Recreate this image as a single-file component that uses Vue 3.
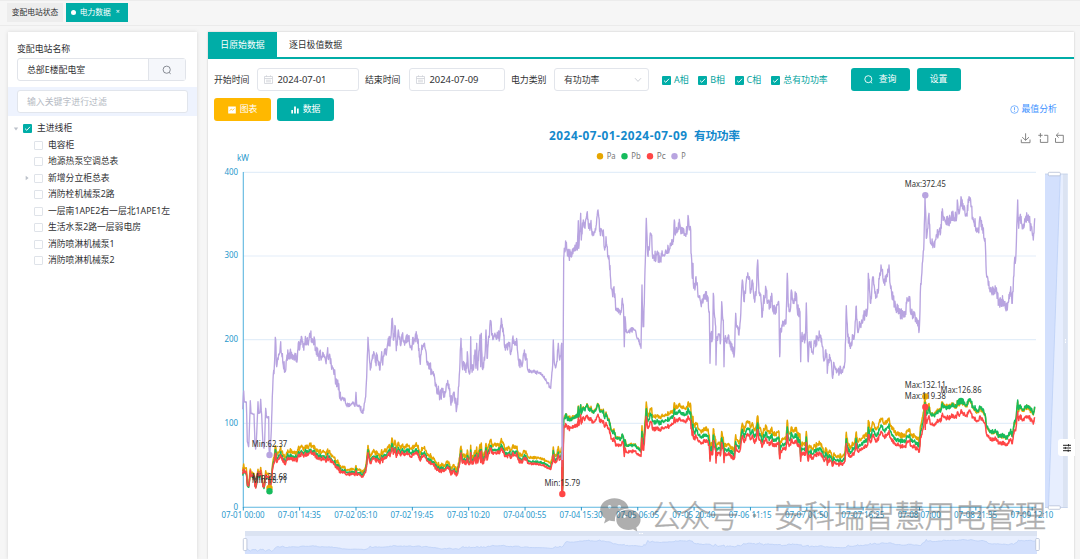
<script setup>
const tree = [
  { name: '电容柜' },
  { name: '地源热泵空调总表' },
  { name: '新增分立柜总表', parent: true },
  { name: '消防栓机械泵2路' },
  { name: '一层南1APE2右一层北1APE1左' },
  { name: '生活水泵2路一层弱电房' },
  { name: '消防喷淋机械泵1' },
  { name: '消防喷淋机械泵2' }
]
const phases = [
  { name: 'A相', w: 15.3 },
  { name: 'B相', w: 15.3 },
  { name: 'C相', w: 15.7 },
  { name: '总有功功率', w: 45 }
]
const legend = [
  { x: 600, name: 'Pa', color: '#e6a600', w: 9 },
  { x: 624.5, name: 'Pb', color: '#16bb5c', w: 9.5 },
  { x: 650, name: 'Pc', color: '#ff4646', w: 9 },
  { x: 674.5, name: 'P', color: '#b8a4e0', w: 4.5 }
]
const xLabels = ['07-01 00:00', '07-01 14:35', '07-02 05:10', '07-02 19:45', '07-03 10:20', '07-04 00:55', '07-04 15:30', '07-05 06:05', '07-05 20:40', '07-06 11:15', '07-07 01:50', '07-07 16:25', '07-08 07:00', '07-08 21:35', '07-09 12:10']
const yLabels = [0, 100, 200, 300, 400]
const BASE = 507
const SCALE = 0.8375

const blocks = [
  { ox: 205, oy: 330, d: '113,238 116,183 118,215 124,216 127,335 131,350 132,330 136,212 138,250 147,252 150,345 152,357 154,335 159,215 161,250 165,248 167,208 170,255 174,345 177,355 179,330 182,235 185,262 191,260 192,355 194,375 198,320 202,200 204,150 208,110 211,22 215,110 222,75 227,35 231,80 241,125 246,75 255,70 263,88 270,70 277,88 281,35 284,58 290,20 294,52 300,38 306,25 310,45 314,10 320,25 325,30 333,55 340,72 352,82 362,95 367,67 375,80 380,118 388,125 395,170 398,150 407,208 418,205 425,225 440,222 451,222 453,187 455,225 465,232 474,250 478,220 482,200 485,140 489,22 493,80 496,120 500,90 505,75 512,95 517,75 525,120 530,65 533,105 538,65 544,75 550,25 555,48 562,-35 565,30 571,-10 574,62 580,0 586,45 592,12 600,38 610,25 618,48 628,32 636,15 642,55 648,75 655,50' },
  { ox: 420, oy: 300, d: '0,185 8,140 18,155 22,195 40,215 48,260 60,285 75,275 82,255 88,270 92,310 100,280 110,325 114,290 119,210 123,115 127,200 140,205 142,155 146,215 151,205 152,110 154,205 160,210 165,150 168,205 170,130 173,210 180,105 182,200 184,100 187,205 195,165 198,90 201,175 207,110 212,62 216,105 226,110 240,105 244,55 248,95 252,105 255,140 265,130 274,155 279,108 284,135 291,125 295,180 306,200 312,165 320,175 323,210 355,218 370,230 380,245 392,265 397,210 400,120 404,195 410,185 415,130 419,180 425,130 426,480 427,500 428,440' },
  { ox: 540, oy: 180, d: '71,235 73,205 78,195 86,230 100,210 110,190 112,210 115,122 116,205 122,100 124,180 130,120 135,145 142,95 146,145 152,130 155,150 167,150 174,90 180,155 190,150 194,210 198,170 203,230 208,245 212,300 218,350 222,320 227,390 243,398 247,355 250,375 253,500 255,410 258,455 285,450 294,475 303,505 306,315 309,440 311,440 315,270 319,115 323,225 328,210 330,170 334,165 338,235 350,225 360,238 362,245 365,225 380,220 392,190 400,185 403,120 406,165 419,130 424,160 430,145 435,165 442,150 445,110 448,150 452,150 453,220 457,295 459,250 460,310 466,320 468,290 473,335 484,380 492,345 503,350 508,395 510,550 512,460 518,475 520,340 523,400 527,440 528,555 530,475 542,480 545,365 550,420 552,560 554,475 563,478 570,490 578,500 583,525 587,400 590,440 597,465 600,430 607,300 613,365 620,290 628,290 631,340 637,300 641,345 645,360 649,330 653,240 657,340 661,345 667,410 670,370 678,325 682,370 690,380 695,340 698,390 717,380 719,530 722,445 738,430 742,280 745,380 752,380 754,330 757,360 768,345 772,390 780,395 782,545 785,470 796,480 799,370 802,480' },
  { ox: 800, oy: 160, d: '24,602 25,605 28,545 38,575 45,550 60,525 68,560 70,590 80,580 82,640 85,600 93,600 98,655 102,610 112,630 125,630 135,605 139,437 143,530 150,550 163,530 168,440 172,500 177,505 185,480 203,445 205,340 212,430 219,350 227,415 233,395 243,315 252,370 262,350 267,315 272,385 280,420 288,445 305,465 315,470 320,430 328,410 332,460 345,465 358,508 361,400 367,310 371,270 375,108 379,235 387,160 390,230 400,255 410,230 424,205 425,155 432,178 445,185 460,165 470,170 472,120 478,160 483,110 490,150 500,160 507,110 513,140 520,180 535,215 540,170 548,205 556,250 560,350 575,400 588,390 597,430 610,420 622,450 632,380 637,430 643,310 648,280 653,120 656,205 660,170 668,200 685,165 700,240 704,175' }
]
const points = blocks.flatMap(b => b.d.split(' ').map(s => {
  const [x, y] = s.split(',').map(Number)
  return [b.ox + x / 3, b.oy + y / 3]
}))
const extra = [[800.7, 361], [801.3, 337], [805, 338], [806.3, 303]]
const all = points.concat(extra).sort((a, b) => a[0] - b[0])

let seed = 71
const rnd = () => {
  seed = (seed * 16807) % 2147483647
  return seed / 2147483647 - 0.5
}
const amp = x => {
  if (x < 271) return 1.5
  if (x > 338 && x < 370) return 5
  if (x > 527 && x < 552) return 4
  if (x > 614 && x < 640) return 6
  return 11.5
}
const samples = []
for (let i = 0; i < all.length - 1; i++) {
  const [x0, y0] = all[i]
  const [x1, y1] = all[i + 1]
  samples.push([x0, y0])
  const n = Math.floor((x1 - x0) / 0.42)
  for (let k = 1; k <= n; k++) {
    const t = k / (n + 1)
    samples.push([x0 + (x1 - x0) * t, y0 + (y1 - y0) * t + rnd() * amp(x0)])
  }
}
samples.push(all[all.length - 1])
const line = pts => 'M' + pts.map(p => p[0].toFixed(1) + ' ' + p[1].toFixed(1)).join('L')
const total = line(samples)
const ratio = {
  a: x => (x < 563 ? 0.358 : x < 641 ? 0.347 : x < 690 ? 0.358 : x < 925 ? 0.366 : x < 955 ? 0.35 : 0.341),
  b: x => (x < 270 ? 0.315 : x < 563 ? 0.328 : x < 641 ? 0.344 : x < 930 ? 0.336 : 0.345),
  c: x => (x < 270 ? 0.325 : x < 563 ? 0.312 : 0.309)
}
const phaseLine = key => line(samples.map(([x, y]) => [x, BASE - (BASE - y) * ratio[key](x) + rnd() * 1.8 - 0.9]))
const lineA = phaseLine('a')
const lineB = phaseLine('b')
const lineC = phaseLine('c')
const mini = samples.filter((s, i) => i % 4 === 0 && Math.abs(s[0] - 562) > 0.7).map(([x, y]) => [245 + (x - 243) * 0.999, 554 - (BASE - y) * 0.047])
const miniLine = line(mini)
const miniArea = miniLine + 'L1037 554L245 554Z'

const marks = [
  { x: 269.5, y: 455, c: '#b8a4e0', t: 'Min:62.37', w: 35.5 },
  { x: 269.5, y: 488, c: '#e6a600', t: 'Min:22.68', w: 35.5 },
  { x: 269.5, y: 491.3, c: '#16bb5c', t: 'Min:18.71', w: 35.5 },
  { x: 562.3, y: 494, c: '#ff4646', t: 'Min:15.79', w: 35.5 },
  { x: 925.3, y: 195.3, c: '#b8a4e0', t: 'Max:372.45', w: 41 },
  { x: 925.3, y: 396.4, c: '#e6a600', t: 'Max:132.11', w: 41 },
  { x: 961, y: 401, c: '#16bb5c', t: 'Max:126.86', w: 41 },
  { x: 925.3, y: 407, c: '#ff4646', t: 'Max:119.38', w: 41 }
]
</script>

<template>
  <div class="page">
    <nav class="tabs">
      <span class="tab">变配电站状态</span>
      <span class="tab active"><i class="dot"></i>电力数据<b class="close">×</b></span>
    </nav>
    <div class="body">
      <aside class="side">
        <div class="label">变配电站名称</div>
        <div class="station">
          <span class="station-name">总部E楼配电室</span>
          <span class="station-btn">
            <svg width="10" height="10" viewBox="0 0 10 10"><circle cx="4.7" cy="4.7" r="3.6" fill="none" stroke="#7d818a" stroke-width=".9" /><path d="M7 7.4L8.7 8.8" stroke="#7d818a" stroke-width=".9" /></svg>
          </span>
        </div>
        <div class="filter"><div class="filter-input">输入关键字进行过滤</div></div>
        <ul class="tree">
          <li class="root">
            <svg class="arrow" width="6" height="6" viewBox="0 0 6 6"><path d="M.8 1.5H5.2L3 4.5Z" fill="#bcc1ca" /></svg>
            <span class="check on"><svg viewBox="0 0 9 9"><path d="M2 4.6L3.8 6.3L7 2.8" /></svg></span>主进线柜
          </li>
          <li v-for="n in tree" :key="n.name">
            <svg class="arrow" width="6" height="6" viewBox="0 0 6 6"><path v-if="n.parent" d="M1.7 .8V5.2L4.6 3Z" fill="#bcc1ca" /></svg>
            <span class="check"></span>{{ n.name }}
          </li>
        </ul>
      </aside>
      <main class="main">
        <div class="heads"><span class="head active">日原始数据</span><span class="head">逐日极值数据</span></div>
        <div class="form">
          <span class="lab">开始时间</span>
          <span class="date">
            <svg width="9" height="9" viewBox="0 0 9 9"><path d="M.5 1.5H8.5V8.5H.5ZM.5 3.5H8.5M2.5 .3V2M6.5 .3V2M2 5.2H7M2 6.8H7" fill="none" stroke="#cfd2d8" stroke-width=".8" /></svg>2024-07-01</span>
          <span class="lab second">结束时间</span>
          <span class="date end">
            <svg width="9" height="9" viewBox="0 0 9 9"><path d="M.5 1.5H8.5V8.5H.5ZM.5 3.5H8.5M2.5 .3V2M6.5 .3V2M2 5.2H7M2 6.8H7" fill="none" stroke="#cfd2d8" stroke-width=".8" /></svg>2024-07-09</span>
          <span class="lab third">电力类别</span>
          <span class="select">有功功率<svg width="8" height="6" viewBox="0 0 8 6"><path d="M1 1.2L4 4.4L7 1.2" fill="none" stroke="#bfc3ca" stroke-width=".8" /></svg></span>
          <div class="phases">
            <span v-for="p in phases" :key="p.name" class="phase"><span class="check on"><svg viewBox="0 0 9 9"><path d="M2 4.6L3.8 6.3L7 2.8" /></svg></span><span :style="{ width: p.w + 'px' }">{{ p.name }}</span></span>
          </div>
          <span class="btn query"><svg width="9" height="9" viewBox="0 0 9 9"><circle cx="4.3" cy="4.2" r="3.5" fill="none" stroke="#fff" stroke-width=".9" /><path d="M6.6 6.8L8.2 8.3" stroke="#fff" stroke-width=".9" /></svg>查询</span>
          <span class="btn set">设置</span>
        </div>
        <div class="actions">
          <span class="btn chart-btn"><svg width="8" height="8" viewBox="0 0 8 8"><path d="M.2 .5H7.8V7.5H.2Z" fill="#fff" /><path d="M1.5 4.7L3.2 3.2L4.6 4.2L6.5 2.6" fill="none" stroke="#ffb800" stroke-width=".7" /></svg>图表</span>
          <span class="btn data-btn"><svg width="8" height="8" viewBox="0 0 8 8"><path d="M.3 4H2V7.5H.3ZM3.1 .6H4.9V7.5H3.1ZM6 2.6H7.7V7.5H6Z" fill="#fff" /></svg>数据</span>
          <span class="analysis"><svg width="9" height="9" viewBox="0 0 9 9"><circle cx="4.5" cy="4.5" r="3.8" fill="none" stroke="#4a98ff" stroke-width=".7" /><path d="M4.5 2.2V5.2M4.5 6V6.8" stroke="#4a98ff" stroke-width=".8" /></svg>最值分析</span>
        </div>
        <svg class="chart" width="866" height="438" viewBox="208 121 866 438">
          <text x="549" y="140" class="title" textLength="138">2024-07-01-2024-07-09</text>
          <text x="694" y="140" class="title" textLength="46">有功功率</text>
          <g v-for="l in legend" :key="l.name">
            <circle :cx="l.x" cy="156.2" r="3.2" :fill="l.color" />
            <text :x="l.x + 6.7" y="158.6" class="leg" :textLength="l.w" lengthAdjust="spacingAndGlyphs">{{ l.name }}</text>
          </g>
          <g fill="none" stroke="#777" stroke-width=".9">
            <path d="M1021.3 139.5V142.7H1030V139.5M1025.6 133.3V140.2M1022.2 137.2L1025.6 140.3L1029 137.2" />
            <path d="M1038.3 135.3H1042.6M1040.4 133.1V137.5M1044.2 135.3H1047.8V142.4H1040.4V139" />
            <path d="M1055.5 138V142.4H1063.3V135.3H1056.5M1058.6 133L1056.2 135.3L1058.6 137.6" />
          </g>
          <path d="M243 172.3H1036M243 256H1036M243 339.7H1036M243 423.4H1036" stroke="#e3eef9" stroke-width="1.2" />
          <text x="237" y="161" class="axis" textLength="12" lengthAdjust="spacingAndGlyphs">kW</text>
          <text v-for="v in yLabels" :key="v" x="238" :y="BASE - v * SCALE + 2.7" class="axis" text-anchor="end" :textLength="v ? 13.6 : 4.6" lengthAdjust="spacingAndGlyphs">{{ v }}</text>
          <path d="M243.3 172V507.3H1036" fill="none" stroke="#5db7e0" stroke-width="1.1" />
          <g v-for="(t, i) in xLabels" :key="t">
            <path :d="`M${243.3 + i * 56.35} 507V510.5`" stroke="#2998cc" />
            <text :x="221.5 + i * 56.35" y="518.4" class="axis" textLength="43" lengthAdjust="spacingAndGlyphs">{{ t }}</text>
          </g>
          <g fill="none" stroke-linejoin="round" stroke-width="1.5">
            <path :d="lineA" stroke="#e6a600" />
            <path :d="lineB" stroke="#16bb5c" />
            <path :d="lineC" stroke="#ff4646" />
            <path :d="total" stroke="#b8a4e0" stroke-width="1.35" />
            <path d="M562.2 460V494" stroke="#ff4646" stroke-width="1.4" />
            <path d="M925.3 430V407" stroke="#ff4646" />
          </g>
          <circle v-for="m in marks" :key="m.t" :cx="m.x" :cy="m.y" r="3.2" :fill="m.c" />
          <text v-for="m in marks" :key="'t' + m.t" :x="m.x - m.w / 2" :y="m.y - 8.2" class="mark" :textLength="m.w" lengthAdjust="spacingAndGlyphs">{{ m.t }}</text>
          <rect x="245" y="531" width="792" height="23" fill="#e7eefe" />
          <rect x="245" y="531" width="792" height="5" fill="#dbe3f2" />
          <path :d="miniArea" fill="#d3e0fd" />
          <path :d="miniLine" fill="none" stroke="#bdd0f6" stroke-width=".8" />
          <rect x="243.3" y="538.5" width="3.6" height="12" rx="1" fill="#fff" stroke="#b4bfd5" stroke-width=".8" />
          <rect x="1035.7" y="538.5" width="3.6" height="12" rx="1" fill="#fff" stroke="#b4bfd5" stroke-width=".8" />
          <path d="M639 533.5h4" stroke="#fff" stroke-dasharray="1 .5" />
          <rect x="1045" y="174" width="22.7" height="333.5" fill="#e7eefe" />
          <rect x="1063" y="174" width="4.7" height="333.5" fill="#dbe3f2" />
          <path d="M1045 174H1060.3L1048.5 507.5H1045Z" fill="#d3e0fd" />
          <path d="M1060.3 174L1048.5 507.5" stroke="#bdd0f6" stroke-width=".8" />
          <path d="M1045 174H1067.7M1045 507.5H1067.7" stroke="#c2cfe9" stroke-width=".8" />
          <rect x="1048.3" y="172.3" width="12" height="3.5" rx="1" fill="#fff" stroke="#b4bfd5" stroke-width=".8" />
          <rect x="1048.3" y="505.8" width="12" height="3.5" rx="1" fill="#fff" stroke="#b4bfd5" stroke-width=".8" />
          <path d="M1065.5 339v4" stroke="#fff" stroke-dasharray="1 .5" />
          <g class="brand">
            <path fill-rule="evenodd" d="M614.4 498.3C606.5 498.3 600.2 503.4 600.2 509.8C600.2 513.5 602.3 516.7 605.5 518.8L604 523.6L609.3 520.6Q611.8 521.4 615 521.3C614 514 620 508.7 628.6 508.4C627.7 502.5 621.7 498.3 614.4 498.3ZM607.8 506.8A1.8 1.8 0 1 1 611.4 506.8A1.8 1.8 0 1 1 607.8 506.8ZM617.5 506.8A1.8 1.8 0 1 1 621.1 506.8A1.8 1.8 0 1 1 617.5 506.8Z" />
            <path fill-rule="evenodd" d="M628.5 509.6C621.7 509.6 616.3 514 616.3 519.7C616.3 525.4 621.7 530 628.5 530Q631 530 633 529.2L637.3 531.5L636.3 527.4C639 525.5 640.6 522.8 640.6 519.7C640.6 514 635.2 509.6 628.5 509.6ZM623.2 516.5A1.4 1.4 0 1 1 626 516.5A1.4 1.4 0 1 1 623.2 516.5ZM630.8 516.5A1.4 1.4 0 1 1 633.6 516.5A1.4 1.4 0 1 1 630.8 516.5Z" />
            <text x="650.5" y="526.6" textLength="88.5">公众号</text>
            <circle cx="754.5" cy="515.5" r="1.8" />
            <text x="773.5" y="526.6" textLength="272.5">安科瑞智慧用电管理</text>
          </g>
        </svg>
      </main>
    </div>
    <div class="settings"><svg width="10" height="10" viewBox="0 0 10 10"><path d="M1 2.3H9M1 5H9M1 7.7H9M6.5 1.2V3.4M3.3 3.9V6.1M6.2 6.6V8.8" stroke="#222" stroke-width="1" /></svg></div>
  </div>
</template>

<style>
body { margin: 0; overflow: hidden; }
</style>
<style scoped>
* { box-sizing: border-box; }
.page { position: relative; width: 1080px; height: 559px; overflow: hidden; background: #f6f6f6; color: #303133; font: 8.9px/1.2 "Noto Sans", "Noto Sans CJK SC", sans-serif; display: flex; flex-direction: column; white-space: nowrap; }
.tabs { height: 26px; flex: none; display: flex; gap: 3px; padding: 2px 7px 0; border-top: 1px solid #ececec; border-bottom: 1px solid #ebebeb; }
.tab { height: 19px; width: 56px; display: flex; align-items: center; justify-content: center; background: #ededed; font-size: 7.75px; }
.tab.active { width: 62px; background: #00ada7; color: #fff; padding-right: 3px; }
.dot { width: 5px; height: 5px; border-radius: 50%; background: #fff; margin-right: 3.5px; }
.close { font-weight: 400; font-size: 7px; margin-left: 5px; }
.body { flex: 1; display: flex; gap: 11px; padding: 6px 6px 0 8px; }
.side { width: 189px; background: #fff; box-shadow: 0 0 4px rgba(0, 0, 0, .13); padding-top: 11px; }
.label { padding-left: 9px; height: 15px; line-height: 11px; }
.station { margin-left: 9px; width: 169px; height: 23px; border: 1px solid #e1e4ea; border-radius: 3px; display: flex; }
.station-name { flex: 1; padding-left: 9px; line-height: 21px; }
.station-btn { width: 37px; background: #f5f7fb; border-left: 1px solid #e1e4ea; display: flex; align-items: center; justify-content: center; }
.filter { margin-top: 6px; height: 29px; padding: 3px 9px; background: #eef3fe; }
.filter-input { width: 171px; height: 23px; border: 1px solid #e1e5ec; border-radius: 3px; background: #fff; color: #b5bac3; line-height: 22px; padding-left: 9px; }
.tree { list-style: none; margin: 4.4px 0 0; padding: 0; font-size: 8.8px; }
.tree li { height: 16.5px; display: flex; align-items: center; padding-left: 16px; }
.tree li.root { padding-left: 5px; }
.arrow { margin-right: 4px; flex: none; }
.check { width: 9px; height: 9px; border: 1px solid #dfe3e9; border-radius: 1px; background: #fff; margin-right: 5px; flex: none; }
.tree .check { margin-right: 5px; }
.check.on { border: 0; background: #00ada7; display: flex; }
.check path { fill: none; stroke: #fff; stroke-width: .9; }
.main { width: 866px; background: #fff; box-shadow: 0 0 2px rgba(0, 0, 0, .2); }
.heads { height: 27px; border-bottom: 2px solid #00ada7; display: flex; }
.head { height: 26px; width: 77px; display: flex; align-items: center; justify-content: center; }
.head.active { width: 69px; background: #00ada7; color: #fff; }
.form { height: 23px; margin-top: 9px; padding-left: 6px; display: flex; align-items: center; }
.lab { width: 43px; padding-top: 1px; }
.date { width: 102px; height: 23px; border: 1px solid #e2e5eb; border-radius: 3px; display: flex; align-items: center; gap: 4.5px; padding-left: 6px; font-size: 9.4px; }
.date.end { width: 96px; }
.second { margin-left: 6px; width: 44px; }
.third { margin-left: 6px; width: 43px; }
.select { width: 95px; height: 23px; border: 1px solid #e2e5eb; border-radius: 3px; display: flex; align-items: center; justify-content: space-between; padding: 1px 6px 0 9px; }
.phases { display: flex; gap: 9px; margin-left: 13px; width: 188.5px; padding-top: 1px; color: #00a29d; }
.phase { display: flex; align-items: center; }
.phase .check { margin-right: 3px; }
.btn { height: 23px; border-radius: 3px; background: #00ada7; color: #fff; display: flex; align-items: center; justify-content: center; gap: 5px; }
.query { width: 59px; gap: 6px; }
.set { width: 44px; margin-left: 7px; }
.actions { height: 23px; margin-top: 7px; padding: 0 17px 0 6px; display: flex; }
.chart-btn { width: 57px; background: #ffb800; gap: 4px; }
.data-btn { width: 57px; margin-left: 6px; gap: 4px; }
.analysis { margin-left: auto; display: flex; align-items: center; gap: 3px; color: #3d91ff; }
.chart { display: block; }
.title { font-size: 11.8px; font-weight: 700; fill: #1489cc; }
.leg { font-size: 8.2px; fill: #777; }
.axis { font-size: 8.3px; fill: #2998cc; }
.mark { font-size: 8.1px; fill: #333; }
.brand { fill: #555; opacity: .47; font-size: 31px; font-weight: 300; }
.brand text { stroke: #555; stroke-width: .45; }
.settings { position: absolute; right: 5px; top: 439px; width: 17px; height: 17px; border-radius: 3px 0 0 3px; background: #fff; display: flex; align-items: center; justify-content: center; }
</style>
